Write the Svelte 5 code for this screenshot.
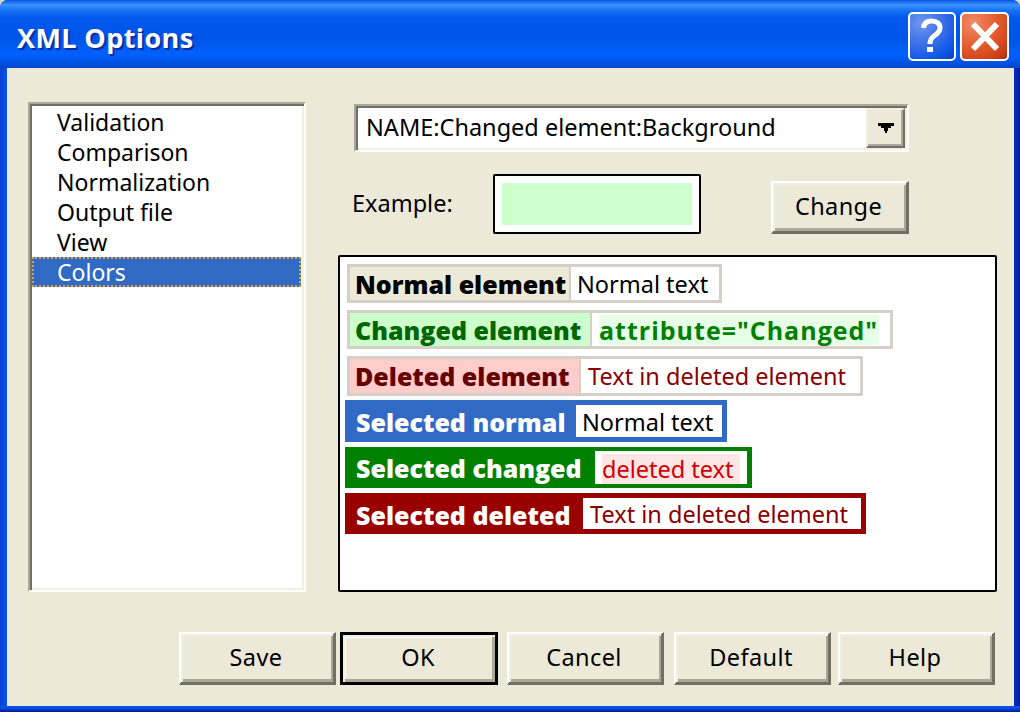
<script>
  const items = ['Validation', 'Comparison', 'Normalization', 'Output file', 'View', 'Colors'];
</script>

<div class="win">
  <header class="title">
    <span class="cap">XML Options</span>
    <div class="ctl">
      <span class="cb help-b">
        <svg viewBox="0 0 44 45" width="44" height="45"><path d="M13.5 14 C14 8 18 7 21.5 7 C27 7 30 10 30 14 C30 18 27 20 24 22 C21 24 20 26 20 30" fill="none" stroke="#fff" stroke-width="5"/><rect x="17" y="33" width="6" height="5" fill="#fff"/></svg>
      </span>
      <span class="cb close-b">
        <svg viewBox="0 0 44 45" width="44" height="45"><path d="M11 10 L35 35 M35 10 L11 35" stroke="#fff" stroke-width="6" fill="none"/></svg>
      </span>
    </div>
  </header>
  <div class="body">
    <div class="main">
      <ul class="list">
        {#each items as it, i}
          <li class:sel={i === 5}>{it}</li>
        {/each}
      </ul>
      <div class="right">
        <div class="combo">
          <span class="combo-text">NAME:Changed element:Background</span>
          <span class="drop"><svg viewBox="0 0 16 10" width="16" height="10"><path d="M0 0H16V3H13V5H10V8H9V10H7V8H6V5H3V3H0Z" fill="#000"/></svg></span>
        </div>
        <div class="ex">
          <span class="ex-label">Example:</span>
          <div class="ex-box"><div class="ex-fill"></div></div>
          <button class="btn change">Change</button>
        </div>
        <div class="panel">
          <div class="row r-normal"><span class="nm">Normal element</span><span class="vl">Normal text</span></div>
          <div class="row r-changed"><span class="nm">Changed element</span><span class="vl"><b>attribute="Changed"</b></span></div>
          <div class="row r-deleted"><span class="nm">Deleted element</span><span class="vl">Text in deleted element</span></div>
          <div class="row s s-normal"><span class="nm">Selected normal</span><span class="vl">Normal text</span></div>
          <div class="row s s-changed"><span class="nm">Selected changed</span><span class="vl"><i>deleted text</i></span></div>
          <div class="row s s-deleted"><span class="nm">Selected deleted</span><span class="vl">Text in deleted element</span></div>
        </div>
      </div>
    </div>
    <div class="actions">
      <button class="btn a save">Save</button>
      <button class="btn a ok">OK</button>
      <button class="btn a cancel">Cancel</button>
      <button class="btn a dflt">Default</button>
      <button class="btn a hlp">Help</button>
    </div>
  </div>
</div>

<style>
  :global(body) { margin: 0; background: #d6d6cc; }
  .win {
    width: 1020px; height: 712px; box-sizing: border-box; overflow: hidden;
    border-radius: 8px 8px 0 0;
    display: flex; flex-direction: column;
    font-family: "Noto Sans", sans-serif; font-size: 23.5px; color: #000; white-space: nowrap;
    background:
      linear-gradient(180deg, #0a50e8 0, #0a50e8 2px, #00188c 6px) bottom / 100% 6px no-repeat,
      linear-gradient(90deg, #0840d0 0, #0a55f0 7px, #0a4ae0 50%, #0030c0 1014px, #0018a0 100%);
  }
  .title {
    height: 68px; flex: none; display: flex; align-items: center; justify-content: space-between;
    box-sizing: border-box; padding: 0 11px 0 17px;
    background: linear-gradient(180deg, #0a55e0 0, #3a93ff 5px, #1a74f4 10px, #0058ee 18px, #0055e8 40px, #0061ff 54px, #0058f0 60px, #0046c8 68px);
  }
  .cap {
    color: #fff; font-family: "Open Sans", sans-serif; font-weight: 700; font-size: 27px; line-height: 1;
    text-shadow: 2px 2px 0 #0a2fa0; letter-spacing: 0.4px; position: relative; top: 3px;
  }
  .ctl { display: flex; gap: 4px; position: relative; top: 2px; }
  .cb {
    width: 48px; height: 49px; box-sizing: border-box; border: 2px solid #fff; border-radius: 5px;
    display: block; overflow: hidden;
  }
  .cb svg { display: block; }
  .help-b { background: radial-gradient(circle at 25% 20%, #6f95f0 0, #3b6fe6 45%, #1058e8 75%, #0a3fc0 100%); }
  .close-b { width: 49px; background: radial-gradient(circle at 25% 20%, #f08a6a 0, #e45a2c 50%, #d0421a 80%, #a82a0c 100%); }
  .body {
    flex: 1; box-sizing: border-box; margin: 0 6px 6px 7px; background: #ece9d8;
    padding: 34px 17px 0 21px;
    display: flex; flex-direction: column;
  }
  .main { display: flex; gap: 32px; height: 490px; }
  .list {
    list-style: none; margin: 0; padding: 3px 0 0 0; width: 278px; box-sizing: border-box; background: #fff;
    border-style: solid; border-width: 2px; border-color: #aca899 #fff #fff #aca899;
    box-shadow: inset 2px 2px 0 #716f64, inset -2px -2px 0 #f1efe2;
    font-size: 23px;
  }
  .list li { height: 30px; line-height: 30px; padding-left: 25px; box-sizing: border-box; margin: 0 3px 0 2px; }
  .list li.sel { background: #316ac5; color: #fff; outline: 2px dotted #dd9f3f; outline-offset: -2px; }
  .right { flex: 1; display: flex; flex-direction: column; }
  .combo {
    margin: 2px 0 0 16px; width: 555px; height: 48px; box-sizing: border-box; background: #fff;
    display: flex; justify-content: space-between;
    border-style: solid; border-width: 2px; border-color: #aca899 #fff #fff #aca899;
    box-shadow: inset 2px 2px 0 #716f64, inset -2px -2px 0 #f1efe2;
  }
  .combo-text { padding: 2px 0 0 10px; line-height: 38px; }
  .drop {
    width: 39px; margin: 2px 2px 2px 0; box-sizing: border-box; background: #ece9d8;
    display: flex; align-items: center; justify-content: center;
    border-style: solid; border-width: 2px; border-color: #f1efe2 #716f64 #716f64 #f1efe2;
    box-shadow: inset -2px -2px 0 #aca899;
  }
  .ex { display: flex; align-items: flex-start; margin: 22px 0 0 15px; height: 81px; }
  .ex-label { width: 140px; line-height: 58px; margin-left: -1px; padding-right: 1px; box-sizing: content-box; }
  .ex-box { width: 208px; height: 60px; box-sizing: border-box; border: 2px solid #000; border-radius: 2px; background: #fff; padding: 7px; }
  .ex-fill { height: 100%; background: #ccffcc; }
  .btn {
    font: inherit; color: #000; background: #ece9d8; padding: 0 2px 3px 0; box-sizing: border-box; letter-spacing: 0.4px;
    border-style: solid; border-width: 2px 3px 3px 2px; border-color: #fff #716f64 #716f64 #fff;
    box-shadow: inset 2px 2px 0 #f1efe2, inset -2px -3px 0 #aca899;
  }
  .change { width: 138px; height: 53px; margin: 7px 0 0 70px; }
  .panel {
    flex: 1; box-sizing: border-box; border: 2px solid #000; border-radius: 2px; background: #fff;
    padding: 7px 0 0 5px; display: flex; flex-direction: column; align-items: flex-start;
  }
  .row { display: flex; height: 39px; box-sizing: border-box; border: 3px solid #d4d0c8; background: #d4d0c8; margin: 0 0 7px 2px; line-height: 35px; }
  .nm { font-weight: 800; font-size: 25px; padding: 0 5px; font-family: "Open Sans", sans-serif; box-sizing: border-box; }
  .vl { padding: 0 6px; background: #fff; margin-left: 2px; }
  .vl b, .vl i { font-style: normal; display: block; height: 100%; }
  .r-normal { width: 375px; }
  .r-normal .nm { background: #ece9d8; width: 219px; }
  .r-normal .vl { flex: 1; }
  .r-changed { width: 546px; }
  .r-changed .nm { background: #ccffcc; color: #006600; width: 240px; }
  .r-changed .vl { flex: 1; padding: 2px 11px 1px 7px; }
  .r-changed b { background: #e6ffe6; color: #008000; line-height: 30px; font-family: "Open Sans", sans-serif; font-size: 25px; font-weight: 700; letter-spacing: 1px; }
  .r-deleted { width: 516px; height: 40px; margin-bottom: 4px; }
  .r-deleted .nm { background: #ffcccc; color: #660000; width: 229px; }
  .r-deleted .vl { color: #880000; flex: 1; padding-left: 7px; }
  .s { margin-left: 0; border: 5px solid; border-left: 0; color: #fff; height: 42px; margin-bottom: 5px; }
  .s .nm { padding-left: 11px; margin-bottom: -5px; margin-top: -5px; padding-top: 5px; }
  .s .vl { margin-left: 0; line-height: 34px; }
  .s-normal { background: #316ac5; border-color: #316ac5; width: 382px; }
  .s-normal .nm { width: 231px; }
  .s-normal .vl { flex: 1; color: #000; }
  .s-changed { background: #008000; border-color: #008000; width: 407px; height: 41px; border-width: 4px 5px 4px 0; }
  .s-changed .nm { width: 250px; margin-top: -4px; margin-bottom: -4px; padding-top: 4px; }
  .s-changed .vl { flex: 1; padding: 3px 7px 0 7px; }
  .s-changed i { background: #ffe6e6; color: #d00000; line-height: 30px; }
  .s-deleted { background: #990000; border-color: #990000; width: 521px; height: 41px; margin-bottom: 0; }
  .s-deleted .nm { width: 238px; }
  .s-deleted .vl { flex: 1; color: #880000; padding-left: 7px; line-height: 32px; }
  .actions { display: flex; margin: 40px 0 0 151px; }
  .a { width: 157px; height: 53px; }
  .ok { width: 158px; margin-left: 4px; border: 3px solid #000; box-shadow: inset 2px 2px 0 #f1efe2, inset -3px -3px 0 #aca899, inset 3px 3px 0 #fff; }
  .cancel { margin-left: 9px; }
  .dflt { margin-left: 10px; }
  .hlp { margin-left: 7px; }
</style>
